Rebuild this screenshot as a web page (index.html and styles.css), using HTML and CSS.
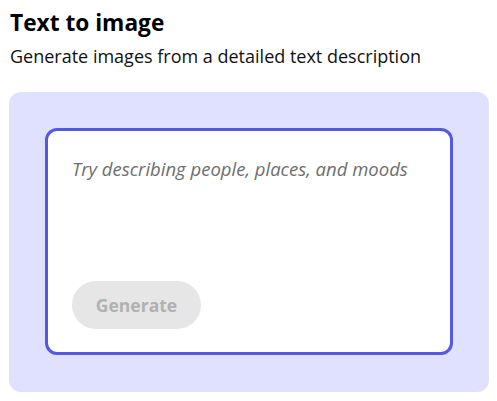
FILE: index.html
```html
<!DOCTYPE html>
<html>
<head>
<meta charset="utf-8">
<link rel="stylesheet" href="styles.css">
</head>
<body>
<div class="page">
  <div class="header">
    <h1 class="title">Text to image</h1>
    <p class="subtitle">Generate images from a detailed text description</p>
  </div>
  <div class="panel">
    <div class="card">
      <div class="placeholder">Try describing people, places, and moods</div>
      <button class="generate" disabled>Generate</button>
    </div>
  </div>
</div>
</body>
</html>
```
FILE: styles.css
```css
html, body {
  margin: 0;
  padding: 0;
  background: #ffffff;
}
.page {
  font-family: "Open Sans", "Noto Sans", sans-serif;
  padding: 9px 0 0 9px;
  width: 480px;
}
.header {
  padding-left: 1px;
}
.title {
  margin: 0;
  font-size: 22.7px;
  line-height: 28px;
  font-weight: 700;
  color: #000;
}
.subtitle {
  margin: 7px 0 0 0;
  font-size: 18px;
  line-height: 24px;
  color: #111;
}
.panel {
  margin-top: 24px;
  background: #e0e1fe;
  border-radius: 12px;
  padding: 36px;
  height: 228px;
}
.card {
  background: #fff;
  border: 3px solid #5558e3;
  border-radius: 12px;
  box-sizing: border-box;
  height: 227px;
  padding: 26px 24px 23px 24px;
  display: flex;
  flex-direction: column;
  justify-content: space-between;
  align-items: flex-start;
}
.placeholder {
  font-style: italic;
  font-size: 18.5px;
  line-height: 24px;
  color: #6e6e6e;
}
.generate {
  font-family: inherit;
  width: 129px;
  height: 48px;
  border: none;
  border-radius: 24px;
  background: #e6e6e6;
  color: #b1b1b1;
  font-size: 17.5px;
  font-weight: 700;
  padding: 0;
}
```
